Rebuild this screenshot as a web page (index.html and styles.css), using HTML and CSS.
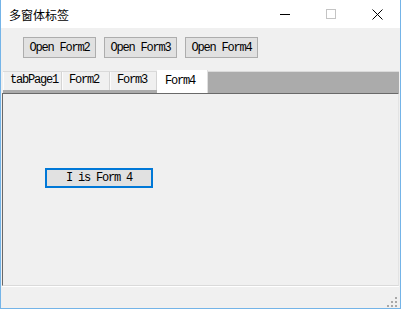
FILE: index.html
```html
<!DOCTYPE html>
<html lang="zh">

<head>
  <meta charset="UTF-8">
  <title>多窗体标签</title>
  <link rel="stylesheet" href="styles.css">
</head>

<body>
  <div class="window">
    <div class="titlebar">
      <span class="title">多窗体标签</span>
      <div class="controls">
        <span class="ctl">
          <svg width="10" height="10" viewBox="0 0 10 10"><path d="M0 5.5H10" stroke="#000" stroke-width="1"/></svg>
        </span>
        <span class="ctl">
          <svg width="10" height="10" viewBox="0 0 10 10"><rect x="0.5" y="0.5" width="9" height="9" fill="none" stroke="#c4c4c4" stroke-width="1"/></svg>
        </span>
        <span class="ctl">
          <svg width="11" height="11" viewBox="0 0 11 11"><path d="M0.5 0.5L10.5 10.5M10.5 0.5L0.5 10.5" stroke="#000" stroke-width="1"/></svg>
        </span>
      </div>
    </div>
    <div class="client">
      <div class="toolbar">
        <button class="btn" type="button">Open Form2</button>
        <button class="btn" type="button">Open Form3</button>
        <button class="btn" type="button">Open Form4</button>
      </div>
      <div class="tabstrip">
        <div class="tab first">tabPage1</div>
        <div class="tab">Form2</div>
        <div class="tab">Form3</div>
        <div class="tab active">Form4</div>
      </div>
      <div class="tabpage">
        <button class="btn focused" type="button">I is Form 4</button>
      </div>
      <div class="statusbar">
        <svg class="grip" width="10" height="10" viewBox="0 0 10 10">
          <rect x="8" y="0" width="2" height="2"/>
          <rect x="4" y="4" width="2" height="2"/>
          <rect x="8" y="4" width="2" height="2"/>
          <rect x="0" y="8" width="2" height="2"/>
          <rect x="4" y="8" width="2" height="2"/>
          <rect x="8" y="8" width="2" height="2"/>
        </svg>
      </div>
    </div>
  </div>
</body>

</html>
```

FILE: styles.css
```css
html, body {
  margin: 0;
  padding: 0;
  background: #ffffff;
}

.window {
  width: 401px;
  height: 309px;
  box-sizing: border-box;
  border: 1px solid #74b4e8;
  border-top: none;
  display: flex;
  flex-direction: column;
}

.titlebar {
  height: 28px;
  background: #ffffff;
  display: flex;
  align-items: center;
}

.title {
  padding-left: 8px;
  font-family: "Noto Sans CJK SC", sans-serif;
  font-size: 12px;
  color: #000;
  flex: 1;
}

.controls {
  display: flex;
  height: 28px;
}

.ctl {
  width: 46px;
  display: flex;
  align-items: center;
  justify-content: center;
}

.ctl svg {
  display: block;
}

.client {
  flex: 1;
  background: #f0f0f0;
  display: flex;
  flex-direction: column;
}

.toolbar {
  padding: 9px 0 0 22px;
  display: flex;
  gap: 8px;
}

.btn {
  width: 73px;
  height: 21px;
  padding: 0;
  margin: 0;
  background: #e1e1e1;
  border: 1px solid #adadad;
  font-family: "Liberation Mono", monospace;
  font-size: 12px;
  letter-spacing: -1.2px;
  color: #000;
}

.tabstrip {
  margin: 13px 1px 0 2px;
  height: 21px;
  border-top: 1px solid #dadada;
  background: #ababab;
  display: flex;
  align-items: flex-start;
}

.tab {
  height: 18px;
  box-sizing: border-box;
  background: #f0f0f0;
  border-left: 1px solid #fcfcfc;
  border-right: 1px solid #d4d4d4;
  font-family: "Liberation Mono", monospace;
  font-size: 12px;
  letter-spacing: -1.2px;
  line-height: 16px;
  padding-left: 6px;
  color: #000;
}

.tab.first {
  width: 59px;
}

.tab:nth-child(2) {
  width: 48px;
}

.tab:nth-child(3) {
  width: 47px;
}

.tab.active {
  width: 51px;
  height: 23px;
  margin-top: -2px;
  background: #ffffff;
  border-left: 1px solid #ffffff;
  border-right: 1px solid #e0e0e0;
  padding-left: 7px;
  line-height: 22px;
}

.tabpage {
  height: 193px;
  box-sizing: border-box;
  margin: 0 1px 0 1px;
  border-top: 1px solid #696969;
  border-left: 1px solid #696969;
  border-right: 1px solid #e3e3e3;
  border-bottom: 1px solid #dadada;
  box-shadow: 0 1px 0 #ffffff;
  padding: 74px 0 0 42px;
}

.btn.focused {
  display: block;
  width: 108px;
  height: 20px;
  border: 2px solid #0078d7;
}

.statusbar {
  flex: 1;
  display: flex;
  justify-content: flex-end;
  align-items: flex-end;
  padding: 0 3px 1px 0;
}

.grip {
  display: block;
  fill: #a8a8a8;
}
```
